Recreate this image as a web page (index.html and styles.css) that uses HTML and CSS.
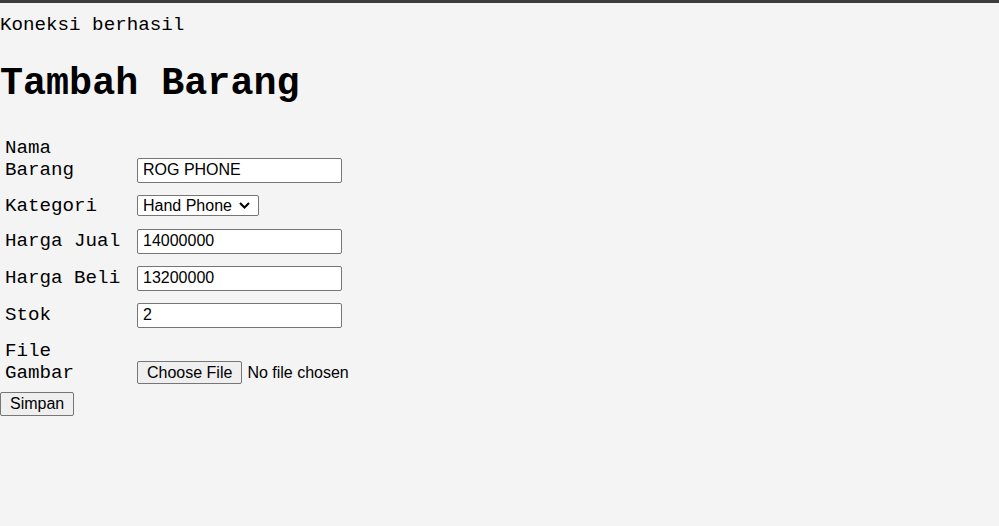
FILE: index.html
```html
<!DOCTYPE html>
<html lang="id">
<head>
<meta charset="utf-8">
<title>Tambah Barang</title>
<link rel="stylesheet" href="styles.css">
</head>
<body>
<p class="status">Koneksi berhasil</p>
<h1 class="title">Tambah Barang</h1>
<form class="form">
  <div class="rows">
    <div class="row">
      <label class="label" for="nama">Nama Barang</label>
      <input class="field" id="nama" type="text" value="ROG PHONE">
    </div>
    <div class="row">
      <label class="label" for="kategori">Kategori</label>
      <select class="select" id="kategori">
        <option>Hand Phone</option>
        <option>Laptop</option>
        <option>Aksesoris</option>
      </select>
    </div>
    <div class="row">
      <label class="label" for="jual">Harga Jual</label>
      <input class="field" id="jual" type="text" value="14000000">
    </div>
    <div class="row">
      <label class="label" for="beli">Harga Beli</label>
      <input class="field" id="beli" type="text" value="13200000">
    </div>
    <div class="row">
      <label class="label" for="stok">Stok</label>
      <input class="field" id="stok" type="text" value="2">
    </div>
    <div class="row">
      <label class="label" for="gambar">File Gambar</label>
      <input class="file" id="gambar" type="file">
    </div>
  </div>
  <button class="submit" type="button">Simpan</button>
</form>
</body>
</html>
```

FILE: styles.css
```css
html {
  background: #f4f4f4;
}

body {
  margin: 0;
  border-top: 3px solid #3c3c3c;
  background: #f4f4f4;
  color: #000;
  font-family: "Liberation Mono", "Courier New", monospace;
  font-size: 19.2px;
  min-height: 523px;
}

.status {
  margin: 0;
  padding-top: 11px;
  line-height: normal;
}

.title {
  margin: 26px 0 0;
  font-size: 38.4px;
  font-weight: bold;
  line-height: normal;
}

.form {
  margin-top: 31px;
}

.rows {
  display: flex;
  flex-direction: column;
  gap: 12px;
  padding-left: 5px;
}

.row {
  display: flex;
  align-items: last baseline;
  gap: 12px;
}

.label {
  width: 120px;
  flex: none;
  line-height: normal;
}

.field,
.select,
.file,
.submit {
  font-family: "Liberation Sans", Arial, sans-serif;
  font-size: 16px;
  color: #000;
}

.field {
  box-sizing: border-box;
  width: 205px;
  height: 25px;
  margin: 0;
  padding: 0 5px;
  border: 1px solid #767676;
  border-radius: 2px;
  background: #fff;
  outline: none;
}

.select {
  box-sizing: border-box;
  width: 122px;
  height: 21px;
  margin: 0;
  padding: 0 0 0 5px;
  border: 1px solid #767676;
  border-radius: 2px;
  background-color: #fff;
  background-image: url("data:image/svg+xml;utf8,<svg xmlns='http://www.w3.org/2000/svg' width='11' height='7' viewBox='0 0 11 7'><path d='M1 1 L5.5 5.5 L10 1' fill='none' stroke='black' stroke-width='2'/></svg>");
  background-repeat: no-repeat;
  background-position: right 8px center;
  -webkit-appearance: none;
  appearance: none;
  line-height: normal;
}

.file {
  margin: 0;
  padding: 0;
  line-height: normal;
}

.file::file-selector-button {
  box-sizing: border-box;
  height: 23px;
  margin: 0 5px 0 0;
  padding: 0 9px;
  border: 1px solid #767676;
  border-radius: 2px;
  background: #efefef;
  color: #000;
  font-family: "Liberation Sans", Arial, sans-serif;
  font-size: 16px;
}

.submit {
  display: block;
  box-sizing: border-box;
  height: 24px;
  margin: 8px 0 0;
  padding: 0 9px;
  border: 1px solid #767676;
  border-radius: 2px;
  background: #efefef;
}
```
